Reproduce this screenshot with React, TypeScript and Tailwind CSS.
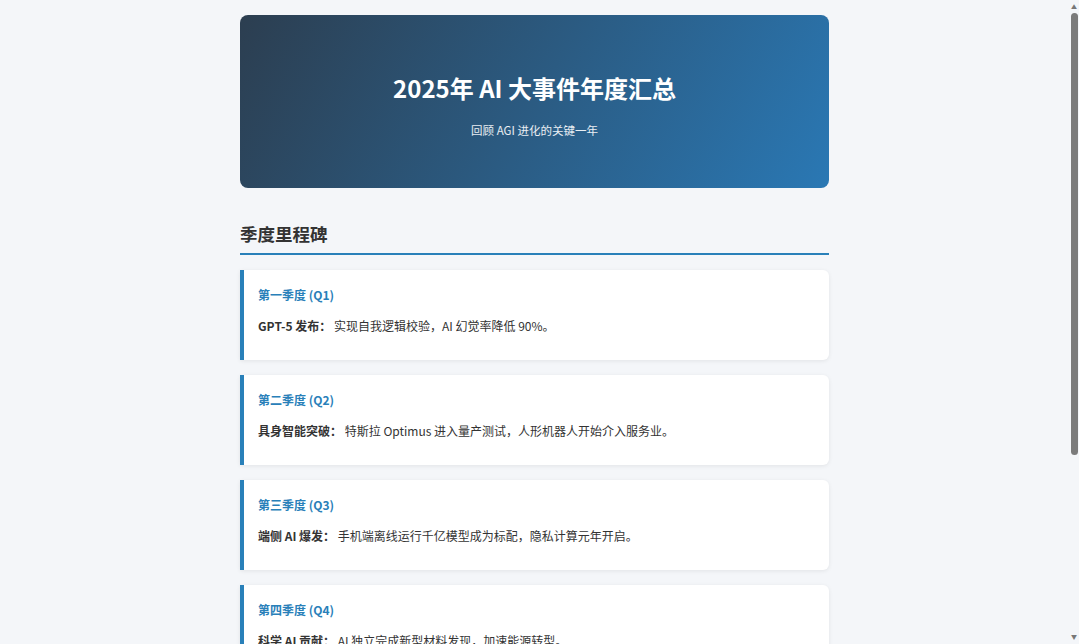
import React from "react";

const items = [
  { q: "第一季度 (Q1)", label: "GPT-5 发布：", text: "实现自我逻辑校验，AI 幻觉率降低 90%。" },
  { q: "第二季度 (Q2)", label: "具身智能突破：", text: "特斯拉 Optimus 进入量产测试，人形机器人开始介入服务业。" },
  { q: "第三季度 (Q3)", label: "端侧 AI 爆发：", text: "手机端离线运行千亿模型成为标配，隐私计算元年开启。" },
  { q: "第四季度 (Q4)", label: "科学 AI 贡献：", text: "AI 独立完成新型材料发现，加速能源转型。" },
  { q: "年度总结", label: "AGI 展望：", text: "多模态智能体全面落地，人机协作进入新阶段。" },
];

export default function App() {
  return (
    <div
      className="h-screen flex overflow-hidden bg-[#f4f6f9] text-[#333]"
      style={{ fontFamily: '"Noto Sans CJK SC", "Open Sans", sans-serif' }}
    >
      <main className="flex-1 overflow-hidden">
        <div className="w-[589px] mx-auto pt-[15px] pb-10">
          <header className="rounded-lg bg-[linear-gradient(120deg,#2c3e50,#2a78b4)] text-white flex flex-col items-center pt-[57px] pb-[49px]">
            <h1 className="text-[24px] leading-[32px] font-bold">2025年 AI 大事件年度汇总</h1>
            <p className="mt-[17px] text-[11.5px] leading-[18px] text-white/90">回顾 AGI 进化的关键一年</p>
          </header>

          <h2 className="mt-[34px] text-[17.5px] leading-[24px] font-bold text-[#333] pb-[7px] border-b-2 border-[#2980b9]">
            季度里程碑
          </h2>

          <div className="mt-[15px] flex flex-col gap-[15px]">
            {items.map((it) => (
              <div
                key={it.q}
                className="bg-white border-l-4 border-[#2980b9] rounded-r-md shadow-[0_1px_4px_rgba(0,0,0,0.08)] pl-[14px] pr-4 pt-[15px] pb-[24px]"
              >
                <h3 className="text-[12px] leading-[20px] font-semibold text-[#2980b9]">{it.q}</h3>
                <p className="mt-[11px] text-[12px] leading-[20px]">
                  <span className="font-bold">{it.label}</span> {it.text}
                </p>
              </div>
            ))}
          </div>
        </div>
      </main>
      <aside className="w-[10px] flex flex-col items-center bg-[#f4f6f9]">
        <div className="h-[13px] flex items-center justify-center text-[6px] leading-none text-[#777]">▲</div>
        <div className="w-[7px] h-[442px] rounded-sm bg-[#7b7b7b]" />
        <div className="flex-1" />
        <div className="h-[14px] flex items-center justify-center text-[6px] leading-none text-[#777]">▼</div>
      </aside>
    </div>
  );
}
